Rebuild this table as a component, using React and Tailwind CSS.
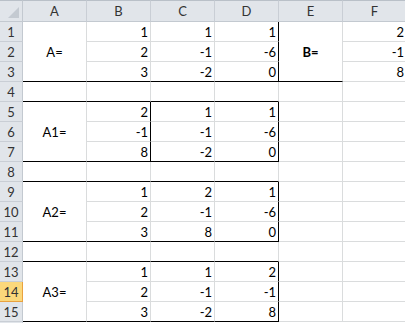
import React from 'react';

const rightCls = { g: 'border-r-[#dadcdd]', k: 'border-r-black' };
const bottomCls = { g: 'border-b-[#dadcdd]', k: 'border-b-black' };

const c = (v, r = 'g', b = 'g') => ({ v, r, b });
const e = () => c('');
const ek = () => c('', 'g', 'k');
const L = (v, bold = false) => ({ v, r: 'g', b: 'k', label: true, bold });

const rows = [
  [L('A='), c(1), c(1), c(1, 'k'), L('B=', true), c(2)],
  [c(2), c(-1), c(-6, 'k'), c(-1)],
  [c(3, 'g', 'k'), c(-2, 'g', 'k'), c(0, 'k', 'k'), c(8)],
  [ek(), ek(), ek(), ek(), e(), e()],
  [L('A1='), c(2, 'k'), c(1), c(1, 'k'), e(), e()],
  [c(-1, 'k'), c(-1), c(-6, 'k'), e(), e()],
  [c(8, 'k', 'k'), c(-2, 'g', 'k'), c(0, 'k', 'k'), e(), e()],
  [ek(), ek(), ek(), ek(), e(), e()],
  [L('A2='), c(1), c(2), c(1, 'k'), e(), e()],
  [c(2), c(-1), c(-6, 'k'), e(), e()],
  [c(3, 'g', 'k'), c(8, 'g', 'k'), c(0, 'k', 'k'), e(), e()],
  [ek(), ek(), ek(), ek(), e(), e()],
  [L('A3='), c(1), c(1), c(2, 'k'), e(), e()],
  [c(2), c(-1), c(-1, 'k'), e(), e()],
  [c(3, 'g', 'k'), c(-2, 'g', 'k'), c(8, 'k', 'k'), e(), e()],
];

const ACTIVE_ROW = 14;

const Cell = ({ cell }) => {
  if (cell.label) {
    return (
      <div
        className={`row-span-3 flex items-center justify-center border-r border-b text-black ${rightCls[cell.r]} ${bottomCls[cell.b]} ${cell.bold ? 'font-bold' : ''}`}
      >
        <span className="pt-[2px]">{cell.v}</span>
      </div>
    );
  }
  return (
    <div
      className={`flex items-end justify-end border-r border-b pr-[2px] pb-[2px] leading-[14px] text-black ${rightCls[cell.r]} ${bottomCls[cell.b]}`}
    >
      {cell.v}
    </div>
  );
};

export default function App() {
  return (
    <div className="w-[405px] h-[323px] overflow-hidden bg-white font-['Lato',sans-serif] text-[13px]">
      <div className="grid grid-cols-[23px_repeat(6,64px)] grid-rows-[22px_repeat(16,20px)] w-[407px]">
        <div className="relative border-t border-t-[#b9c0c8] border-r border-r-[#c3c9d0] border-b border-b-[#c3c9d0] bg-[#e1e5ea]">
          <svg className="absolute right-[3px] bottom-[3px]" width="11" height="11" viewBox="0 0 11 11">
            <polygon points="11,0 11,11 0,11" fill="#c4cad1" />
          </svg>
        </div>
        {['A', 'B', 'C', 'D', 'E', 'F'].map((col) => (
          <div
            key={col}
            className="flex items-center justify-center border-t border-t-[#b9c0c8] border-r border-r-[#c9ced5] border-b border-b-[#c3c9d0] bg-[#e1e5ea] pt-[2px] text-[#333]"
          >
            {col}
          </div>
        ))}
        {rows.map((row, i) => (
          <React.Fragment key={i}>
            <div
              className={`flex items-end justify-center border-r border-b pb-[2px] leading-[14px] text-[#333] ${
                i + 1 === ACTIVE_ROW
                  ? 'bg-[#fbd87b] border-r-[#e9a23f] border-b-[#e9a23f]'
                  : 'bg-[#e1e5ea] border-r-[#c3c9d0] border-b-[#c9ced5]'
              }`}
            >
              {i + 1}
            </div>
            {row.map((cell, j) => (
              <Cell key={j} cell={cell} />
            ))}
          </React.Fragment>
        ))}
        {/* row 16 peeks in below the frame */}
        <div className="border-r border-r-[#c3c9d0] bg-[#e1e5ea]" />
      </div>
    </div>
  );
}
